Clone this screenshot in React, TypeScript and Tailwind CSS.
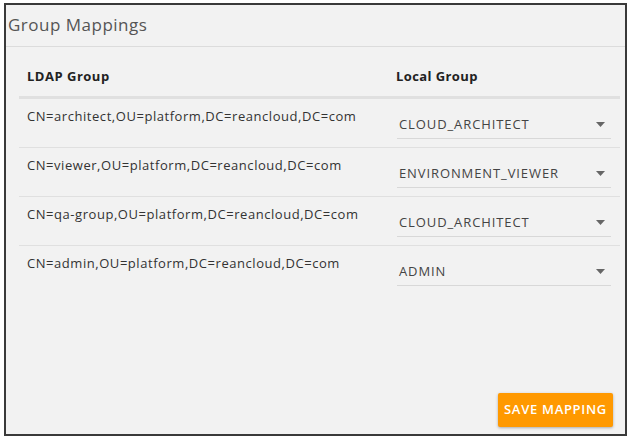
import React from "react";

const rows = [
  { ldap: "CN=architect,OU=platform,DC=reancloud,DC=com", local: "CLOUD_ARCHITECT" },
  { ldap: "CN=viewer,OU=platform,DC=reancloud,DC=com", local: "ENVIRONMENT_VIEWER" },
  { ldap: "CN=qa-group,OU=platform,DC=reancloud,DC=com", local: "CLOUD_ARCHITECT" },
  { ldap: "CN=admin,OU=platform,DC=reancloud,DC=com", local: "ADMIN" },
];

export default function App() {
  return (
    <div
      className="w-[632px] h-[441px] bg-white pt-[3px] pl-[4px]"
      style={{ fontFamily: '"Open Sans", "Liberation Sans", sans-serif' }}
    >
      <div className="w-[623px] h-[433px] border-2 border-[#3a3a3a] bg-[#f2f2f2] flex flex-col">
        <div className="h-[42px] border-b border-[#dcdcdc] flex items-start pt-[7px] pl-[2px]">
          <span className="text-[17px] text-[#555] tracking-[0.5px]">Group Mappings</span>
        </div>
        <div className="pl-[13px] pr-[5px] flex-1 flex flex-col">
          <div className="flex h-[52px] items-center border-b-[3px] border-[#e0e0e0] pt-[10px]">
            <div className="w-[370px] pl-[8px] text-[13px] font-bold text-[#222] tracking-[0.5px]">LDAP Group</div>
            <div className="pl-[7px] text-[13px] font-bold text-[#222] tracking-[0.4px]">Local Group</div>
          </div>
          {rows.map((r, i) => (
            <div
              key={i}
              className={`flex h-[49px] ${i < rows.length - 1 ? "border-b border-[#e0e0e0]" : ""}`}
            >
              <div className="w-[370px] pl-[8px] pt-[8px] text-[13px] text-[#333] tracking-[0.55px]">
                {r.ldap}
              </div>
              <div className="pl-[8px] pt-[12px] flex-1 pr-[9px]">
                <div className="h-[28px] border-b border-[#d8d8d8] flex items-center justify-between pl-[2px] pr-[6px]">
                  <span className="text-[13px] text-[#444] tracking-[0.9px]">{r.local}</span>
                  <svg width="9" height="5" viewBox="0 0 9 5">
                    <path d="M0 0 L9 0 L4.5 5 Z" fill="#666" />
                  </svg>
                </div>
              </div>
            </div>
          ))}
          <div className="flex-1" />
          <div className="flex justify-end pb-[7px] pr-[7px]">
            <button className="w-[115px] h-[34px] bg-[#ff9900] text-white text-[13px] font-semibold tracking-[0.7px] rounded-[2px] shadow-[0_1px_3px_rgba(0,0,0,0.3)]">
              SAVE MAPPING
            </button>
          </div>
        </div>
      </div>
    </div>
  );
}
